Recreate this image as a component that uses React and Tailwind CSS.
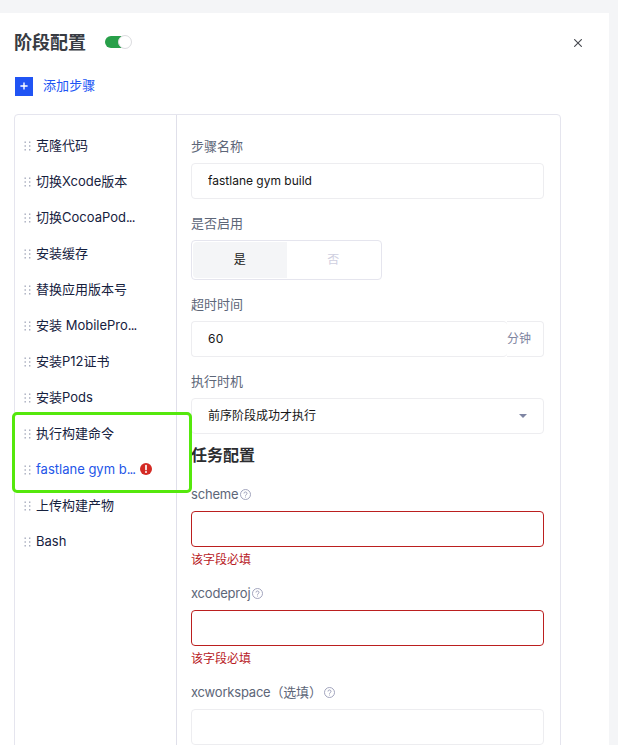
import React, { useState } from "react";

const STEPS = [
  { id: 1, name: "克隆代码" },
  { id: 2, name: "切换Xcode版本" },
  { id: 3, name: "切换CocoaPod", truncated: true },
  { id: 4, name: "安装缓存" },
  { id: 5, name: "替换应用版本号" },
  { id: 6, name: "安装 MobilePro", truncated: true },
  { id: 7, name: "安装P12证书" },
  { id: 8, name: "安装Pods" },
  { id: 9, name: "执行构建命令" },
  { id: 10, name: "fastlane gym b", truncated: true, hasError: true },
  { id: 11, name: "上传构建产物" },
  { id: 12, name: "Bash" },
];

const DragHandle = () => (
  <svg width="8" height="10" viewBox="0 0 8 10" className="shrink-0" fill="#a3a8ba">
    <rect x="0.5" y="0.5" width="1.4" height="1.4" />
    <rect x="5" y="0.5" width="1.4" height="1.4" />
    <rect x="0.5" y="4.3" width="1.4" height="1.4" />
    <rect x="5" y="4.3" width="1.4" height="1.4" />
    <rect x="0.5" y="8.1" width="1.4" height="1.4" />
    <rect x="5" y="8.1" width="1.4" height="1.4" />
  </svg>
);

const HelpIcon = () => (
  <svg width="11" height="11" viewBox="0 0 11 11" fill="none" stroke="#979bb5" strokeWidth="0.9">
    <circle cx="5.5" cy="5.5" r="5" />
    <path d="M4 4.5a1.5 1.5 0 1 1 2.3 1.2c-.5.3-.8.5-.8 1.1" />
    <path d="M5.5 7.6v.9" />
  </svg>
);

const ErrorIcon = () => (
  <svg width="12" height="12" viewBox="0 0 12 12" className="shrink-0 mb-0.5">
    <circle cx="6" cy="6" r="6" fill="#d42a24" />
    <path d="M6 2.6v3.9" stroke="#fff" strokeWidth="1.7" strokeLinecap="round" />
    <circle cx="6" cy="8.9" r="1" fill="#fff" />
  </svg>
);

const Label = ({ children, help }) => (
  <div
    className={`flex items-center gap-[2px] h-5 mb-[7px] text-[13px] leading-5 text-[#5d6678] ${
      help ? "tracking-[-0.2px]" : ""
    }`}
  >
    <span>{children}</span>
    {help && <HelpIcon />}
  </div>
);

const RequiredField = ({ label }) => (
  <div className="mb-[13px]">
    <Label help>{label}</Label>
    <input
      type="text"
      className="block w-full h-9 px-4 text-xs border border-[#bb1f1f] rounded outline-none"
    />
    <p className="mt-[3px] h-5 text-xs leading-5 text-[#b8201f]">该字段必填</p>
  </div>
);

const App = () => {
  const [stepId, setStepId] = useState(10);
  const [enabled, setEnabled] = useState(true);
  const [stepName, setStepName] = useState("fastlane gym build");
  const [timeout, setTimeoutValue] = useState("60");

  return (
    <div className="h-[745px] overflow-hidden bg-[#f4f5f7] pt-[13px] font-['Inter','Noto_Sans_CJK_SC',sans-serif]">
      <main className="w-[609px] h-full bg-white pl-[14px]">
        <header className="flex items-center h-[60px]">
          <h1 className="text-lg font-bold leading-6 text-[#383c43]">
            阶段配置
          </h1>
          <button className="flex items-center justify-end w-[26px] h-3 ml-[19px] mb-0.5 rounded-full bg-[#289f49]">
            <span className="block w-[14px] h-[14px] -mr-px bg-white border border-[#dcdce0] rounded-full shrink-0" />
          </button>
          <button className="ml-auto mr-[27px]">
            <svg width="8" height="8" viewBox="0 0 8 8" stroke="#45484f" strokeWidth="1.1">
              <path d="M0.2 0.2l7.6 7.6M7.8 0.2L0.2 7.8" />
            </svg>
          </button>
        </header>

        <button className="flex items-center h-5 mt-[3px] ml-px text-[13px] tracking-[0.1px] text-[#2054f4]">
          <span className="flex items-center justify-center w-[18px] h-[19px] mr-[10px] bg-[#2054f4]">
            <svg width="8" height="8" viewBox="0 0 8 8" stroke="#fff" strokeWidth="1.4">
              <path d="M4 0.4v7.2M0.4 4h7.2" />
            </svg>
          </span>
          添加步骤
        </button>

        <div className="flex w-[547px] h-[700px] mt-[18px] border border-[#e5e5ee] rounded">
          {/* step list */}
          <div className="relative w-[162px] shrink-0 pt-[13px] border-r border-[#e0e0ea]">
            <ul>
              {STEPS.map((step) => (
                <li
                  key={step.id}
                  onClick={() => setStepId(step.id)}
                  className={`flex items-center h-9 pl-[9px] text-[13px] whitespace-nowrap cursor-pointer ${
                    step.id === stepId ? "text-[#2456e8]" : "text-[#16213e]"
                  }`}
                >
                  <DragHandle />
                  <span className="ml-1 mr-[5px]">
                    {step.name}
                    {step.truncated && (
                      <span className="tracking-[-0.9px]">...</span>
                    )}
                  </span>
                  {step.hasError && <ErrorIcon />}
                </li>
              ))}
            </ul>

            {/* highlight around the build steps */}
            <div className="absolute -left-[3px] top-[297px] w-[180px] h-[81px] border-3 border-[#55e80c] rounded-[5px] pointer-events-none" />
          </div>

          {/* step form */}
          <div className="flex-1 pt-[21px] pl-[14px] pr-4">
            <div className="mb-[14px]">
              <Label>步骤名称</Label>
              <input
                type="text"
                value={stepName}
                onChange={(e) => setStepName(e.target.value)}
                className="block w-full h-9 px-4 pb-0.5 text-xs text-[#161616] border border-[#ededf0] rounded outline-none"
              />
            </div>

            <div className="mb-[14px]">
              <Label>是否启用</Label>
              <div className="flex w-[191px] h-10 p-px text-xs border border-[#e5e5ee] rounded">
                <button
                  className={`flex-1 rounded-l-sm ${
                    enabled ? "bg-[#f4f5f7] text-[#161616]" : "text-[#cfcfdf]"
                  }`}
                  onClick={() => setEnabled(true)}
                >
                  是
                </button>
                <button
                  className={`flex-1 rounded-r-sm ${
                    enabled ? "text-[#cfcfdf]" : "bg-[#f4f5f7] text-[#161616]"
                  }`}
                  onClick={() => setEnabled(false)}
                >
                  否
                </button>
              </div>
            </div>

            <div className="mb-[14px]">
              <Label>超时时间</Label>
              <div className="flex h-9">
                <input
                  type="text"
                  value={timeout}
                  onChange={(e) => setTimeoutValue(e.target.value)}
                  className="flex-1 min-w-0 h-full px-4 pb-0.5 text-xs tracking-[0.2px] text-[#161616] border border-r-0 border-[#ededf0] rounded outline-none"
                />
                <span className="flex items-center w-[37px] text-xs text-[#80859f] border border-l-0 border-[#ededf0] rounded-r">
                  分钟
                </span>
              </div>
            </div>

            <div>
              <Label>执行时机</Label>
              <div className="flex items-center justify-between h-9 pl-4 pr-4 text-xs text-[#161616] border border-[#ededf0] rounded">
                前序阶段成功才执行
                <svg width="8" height="4" viewBox="0 0 8 4" fill="#7f85a3">
                  <path d="M0 0h8L4 4z" />
                </svg>
              </div>
            </div>

            <h2 className="mt-2 mb-[15px] h-[27px] text-base font-bold leading-[27px] text-[#2c2d30]">
              任务配置
            </h2>

            <RequiredField label="scheme" />
            <RequiredField label="xcodeproj" />

            <Label help>xcworkspace（选填）</Label>
            <input
              type="text"
              className="block w-full h-9 px-4 text-xs border border-[#ededf0] rounded outline-none"
            />
          </div>
        </div>
      </main>
    </div>
  );
};

export default App;
